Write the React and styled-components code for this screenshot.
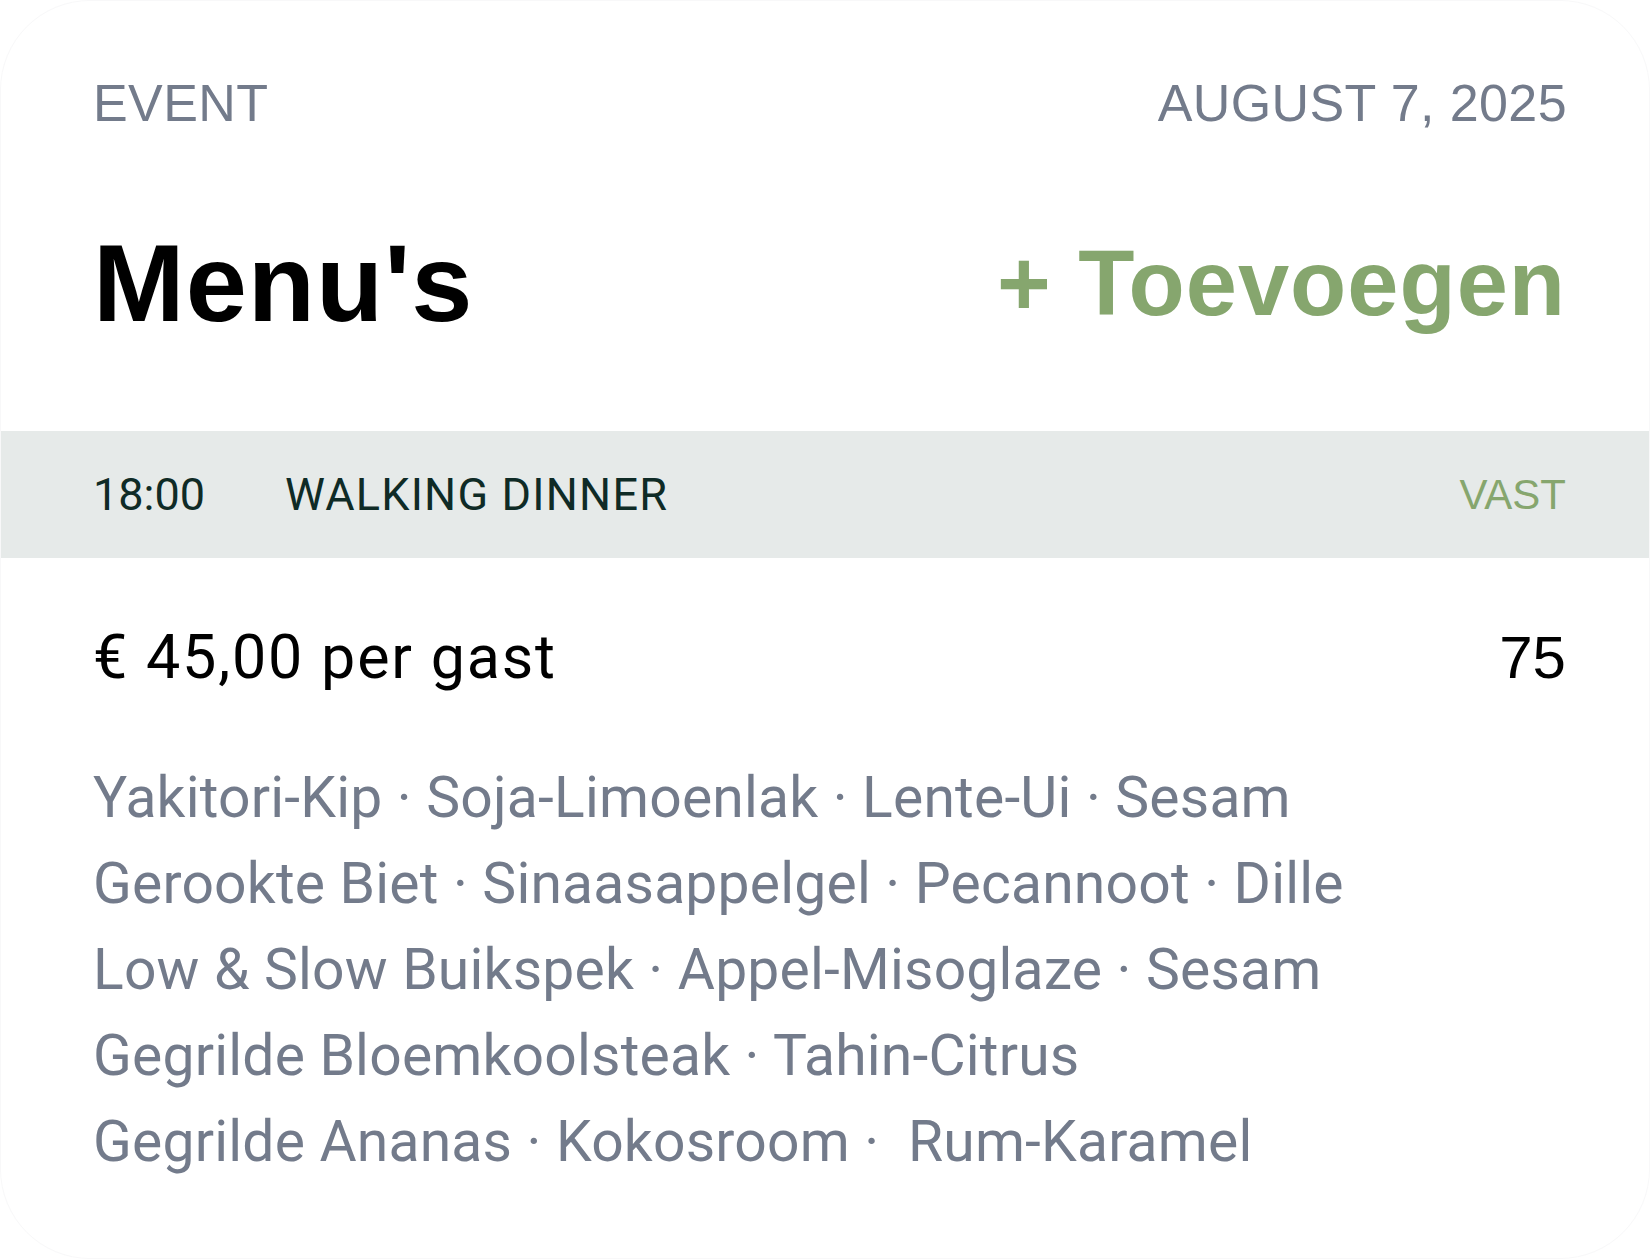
import React from 'react';
import styled, { createGlobalStyle } from 'styled-components';

const GlobalStyle = createGlobalStyle`
  html, body {
    margin: 0;
    padding: 0;
    background: #ffffff;
  }
  * {
    box-sizing: border-box;
  }
`;

const dishes = [
  'Yakitori-Kip · Soja-Limoenlak · Lente-Ui · Sesam',
  'Gerookte Biet · Sinaasappelgel · Pecannoot · Dille',
  'Low & Slow Buikspek · Appel-Misoglaze · Sesam',
  'Gegrilde Bloemkoolsteak · Tahin-Citrus',
  'Gegrilde Ananas · Kokosroom ·  Rum-Karamel',
];

const App = () => {
  return (
    <>
      <GlobalStyle />
      <Card>
        <Header>
          <Meta>EVENT</Meta>
          <Meta>AUGUST 7, 2025</Meta>
        </Header>

        <TitleRow>
          <Title>Menu's</Title>
          <AddButton type="button">+ Toevoegen</AddButton>
        </TitleRow>

        <Band>
          <BandLeft>
            <BandText>18:00</BandText>
            <BandText $wide>WALKING DINNER</BandText>
          </BandLeft>
          <Tag>VAST</Tag>
        </Band>

        <PriceRow>
          <Price>€ 45,00 per gast</Price>
          <Count>75</Count>
        </PriceRow>

        <DishList>
          {dishes.map((dish) => (
            <Dish key={dish}>{dish}</Dish>
          ))}
        </DishList>
      </Card>
    </>
  );
};

// Styled Components
const Card = styled.div`
  width: 100%;
  height: 100vh;
  overflow: hidden;
  background-color: #ffffff;
  border: 1px solid #f8f8f9;
  border-radius: 90px;
`;

const Header = styled.div`
  display: flex;
  justify-content: space-between;
  padding: 76px 82px 0 92px;
`;

const Meta = styled.span`
  font-family: 'Liberation Sans', Arial, sans-serif;
  font-size: 52px;
  line-height: 1;
  letter-spacing: 0.4px;
  color: #737b8b;
`;

const TitleRow = styled.div`
  display: flex;
  justify-content: space-between;
  align-items: center;
  padding: 99px 83px 0 92px;
`;

const Title = styled.h1`
  margin: 0;
  font-family: 'Liberation Sans', Arial, sans-serif;
  font-size: 110px;
  font-weight: 700;
  line-height: 1;
  letter-spacing: 1px;
  color: #000000;
`;

const AddButton = styled.button`
  padding: 0;
  border: none;
  background: none;
  font-family: 'Liberation Sans', Arial, sans-serif;
  font-size: 92px;
  font-weight: 700;
  line-height: 1;
  letter-spacing: 1px;
  color: #86a66e;
  cursor: pointer;
`;

const Band = styled.div`
  display: flex;
  justify-content: space-between;
  align-items: center;
  height: 127px;
  margin-top: 93px;
  padding: 0 83px 0 92px;
  background-color: #e6eae9;
`;

const BandLeft = styled.div`
  display: flex;
  align-items: center;
  gap: 80px;
`;

const BandText = styled.span`
  font-family: Roboto, sans-serif;
  font-size: 45px;
  line-height: 1;
  letter-spacing: ${(p) => (p.$wide ? '1.2px' : '0')};
  color: #0f2b26;
`;

const Tag = styled.span`
  font-family: 'Liberation Sans', Arial, sans-serif;
  font-size: 42px;
  line-height: 1;
  color: #86a66e;
`;

const PriceRow = styled.div`
  display: flex;
  justify-content: space-between;
  align-items: baseline;
  padding: 69px 83px 0 92px;
`;

const Price = styled.span`
  font-family: Roboto, sans-serif;
  font-size: 61px;
  line-height: 1;
  letter-spacing: 1.8px;
  color: #000000;
`;

const Count = styled.span`
  font-family: 'Liberation Sans', Arial, sans-serif;
  font-size: 60px;
  line-height: 1;
  color: #000000;
`;

const DishList = styled.div`
  display: flex;
  flex-direction: column;
  padding: 67px 83px 0 92px;
`;

const Dish = styled.div`
  font-family: Roboto, sans-serif;
  font-size: 57px;
  line-height: 86px;
  letter-spacing: 0.2px;
  color: #737b8b;
  white-space: pre;
`;

export default App;
